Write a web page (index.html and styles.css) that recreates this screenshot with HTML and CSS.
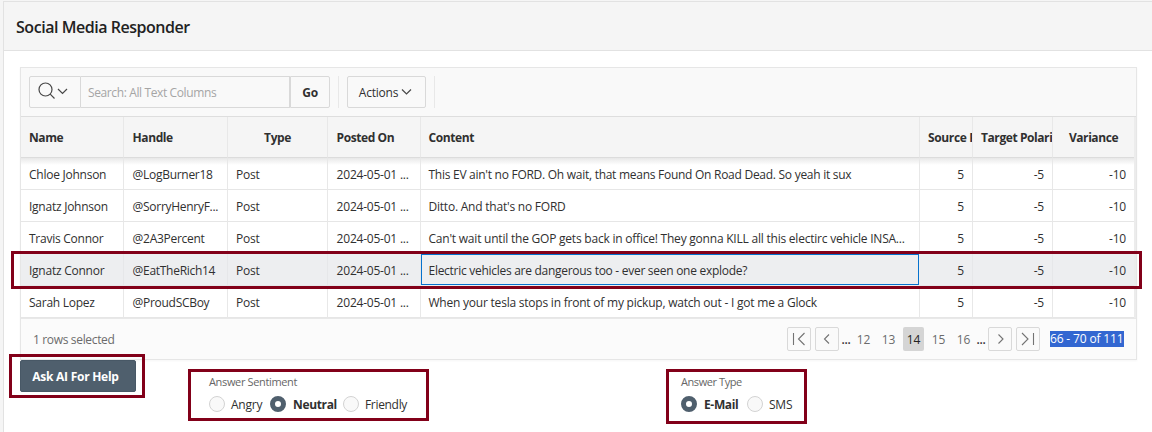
FILE: index.html
```
<!DOCTYPE html>
<html lang="en">
<head>
<meta charset="utf-8">
<title>Social Media Responder</title>
<link rel="stylesheet" href="styles.css">
</head>
<body>
<main class="region">
  <header class="region-header"><h1>Social Media Responder</h1></header>
  <div class="region-body">
    <section class="grid">
      <div class="toolbar">
        <div class="search">
          <button class="search-type"><svg width="34" height="20" viewBox="0 0 34 20"><circle cx="7.500" cy="7.500" r="6.500"/><path d="M12.200 12.200L16.500 16.500M20 7l4.500 4.500L29 7"/></svg></button>
          <div class="search-field">Search: All Text Columns</div>
          <button class="go">Go</button>
        </div>
        <div class="actions-wrap"><button class="actions">Actions<svg width="11" height="8" viewBox="0 0 11 8"><path d="M1 1.500l4.500 4.500L10 1.500"/></svg></button></div>
      </div>
      <div class="table">
        <div class="row head"><div>Name</div><div>Handle</div><div class="center">Type</div><div>Posted On</div><div>Content</div><div class="clip">Source P</div><div class="clip">Target Polari</div><div class="center">Variance</div></div>
        <div class="row first"><div>Chloe Johnson</div><div>@LogBurner18</div><div>Post</div><div>2024-05-01 ...</div><div>This EV ain't no FORD. Oh wait, that means Found On Road Dead. So yeah it sux</div><div class="num">5</div><div class="num">-5</div><div class="num">-10</div></div>
        <div class="row"><div>Ignatz Johnson</div><div>@SorryHenryF...</div><div>Post</div><div>2024-05-01 ...</div><div>Ditto. And that's no FORD</div><div class="num">5</div><div class="num">-5</div><div class="num">-10</div></div>
        <div class="row"><div>Travis Connor</div><div>@2A3Percent</div><div>Post</div><div>2024-05-01 ...</div><div>Can't wait until the GOP gets back in office! They gonna KILL all this electirc vehicle INSA...</div><div class="num">5</div><div class="num">-5</div><div class="num">-10</div></div>
        <div class="row selected"><div>Ignatz Connor</div><div>@EatTheRich14</div><div>Post</div><div>2024-05-01 ...</div><div class="focused">Electric vehicles are dangerous too - ever seen one explode?</div><div class="num">5</div><div class="num">-5</div><div class="num">-10</div></div>
        <div class="row"><div>Sarah Lopez</div><div>@ProudSCBoy</div><div>Post</div><div>2024-05-01 ...</div><div>When your tesla stops in front of my pickup, watch out - I got me a Glock</div><div class="num">5</div><div class="num">-5</div><div class="num">-10</div></div>
      </div>
      <footer class="grid-footer">
        <span class="status">1 rows selected</span>
        <nav class="pager">
          <button class="page-btn"><svg width="22" height="22" viewBox="0 0 22 22"><path d="M5.500 5v12M16.500 5l-6 6 6 6"/></svg></button>
          <button class="page-btn prev"><svg width="22" height="22" viewBox="0 0 22 22"><path d="M13 6.500l-4.500 4.500 4.500 4.500"/></svg></button>
          <span class="dots">...</span>
          <span class="page">12</span><span class="page">13</span><span class="page current">14</span><span class="page">15</span><span class="page">16</span>
          <span class="dots end">...</span>
          <button class="page-btn next"><svg width="22" height="22" viewBox="0 0 22 22"><path d="M9.500 6.500l4.500 4.500-4.500 4.500"/></svg></button>
          <button class="page-btn last"><svg width="22" height="22" viewBox="0 0 22 22"><path d="M5 5l6 6-6 6M16.500 5v12"/></svg></button>
          <span class="range">66 - 70 of 111</span>
        </nav>
      </footer>
    </section>
    <div class="controls">
      <button class="ask">Ask AI For Help</button>
      <div class="field sentiment"><div class="label">Answer Sentiment</div>
        <div class="options"><i class="radio"></i><span class="angry">Angry</span><i class="radio on"></i><b class="neutral">Neutral</b><i class="radio"></i><span class="friendly">Friendly</span></div></div>
      <div class="field type"><div class="label">Answer Type</div>
        <div class="options"><i class="radio on"></i><b class="email">E-Mail</b><i class="radio"></i><span>SMS</span></div></div>
    </div>
  </div>
</main>
<div class="callout callout-row"></div>
<div class="callout callout-ask"></div>
<div class="callout callout-sentiment"></div>
<div class="callout callout-type"></div>
</body>
</html>
```
FILE: styles.css
```
* { box-sizing: border-box; }
body { margin: 0; height: 432px; overflow: hidden; position: relative; padding: 1px 0 0 3px; background: #f5f5f5; font: 12px/16px "Segoe UI", "Open Sans", "Noto Sans", sans-serif; letter-spacing: -.22px; color: #303030; }
button { font: inherit; letter-spacing: inherit; color: inherit; margin: 0; padding: 0; }
svg { fill: none; stroke: #484848; stroke-width: 1.2; display: block; }
.region { height: 431px; border: 1px solid #e2e2e2; border-width: 1px 0 0 1px; background: #fff; }
.region-header { height: 49px; background: #f5f5f5; border-bottom: 1px solid #e2e2e2; padding: 14px 12px 0; }
h1 { margin: 0; font-size: 16px; line-height: 22px; font-weight: 600; letter-spacing: -.46px; color: #222; }
.region-body { padding: 16px 15px 0 16px; }
.grid { width: 1117px; height: 293px; border: 1px solid #e6e6e6; box-shadow: 0 1px 2px #0000000a; }
.toolbar { height: 49px; background: #f9f9f9; border-bottom: 1px solid #dedede; padding: 8px; display: flex; }
.search { display: flex; width: 301px; height: 32px; }
.search-type, .go, .actions, .search-field { border: 1px solid #d9d9d9; background: #f9f9f9; height: 32px; }
.search-type { width: 52px; padding: 0 0 0 8px; border-radius: 2px 0 0 2px; }
.search-field { width: 209px; border-left: 0; padding: 8px 7px; color: #a5a5a5; letter-spacing: -.38px; }
.go { width: 40px; border-radius: 0 2px 2px 0; font-weight: 700; padding-top: 2px; }
.actions-wrap { margin-left: 8px; width: 97px; border: 1px solid #e8e8e8; border-width: 0 1px; padding-left: 8px; }
.actions { width: 79px; display: flex; align-items: center; justify-content: center; gap: 3px; border-radius: 2px; padding: 2px 2px 0 0; }
.actions svg { margin-top: -2px; }
.table { border-right: 2px solid #ececec; }
.row { display: grid; grid-template-columns: 103px 104px 100px 93px 499px 53px 80px 1fr; height: 32px; line-height: 33px; background: #fff; }
.row > div { padding: 0 8px; border-right: 1px solid #e8e8e8; border-bottom: 1px solid #e6e6e6; white-space: nowrap; overflow: hidden; }
.row > div:nth-child(1) { letter-spacing: -.25px; }
.row > div:nth-child(2) { padding-left: 8.600px; letter-spacing: -.29px; }
.row > div:nth-child(4) { padding-left: 8.600px; }
.row > div:nth-child(5) { padding-left: 7.500px; }
.row.first > div:nth-child(5) { letter-spacing: -.27px; }
.row > div:last-child { border-right: 0; }
.row.head { height: 41px; line-height: 42px; background: #f5f5f5; }
.row.head > div { font-weight: 700; letter-spacing: -.42px; border-bottom: 1px solid #dcdcdc; }
.row.head > div:nth-child(6) { letter-spacing: -.36px; }
.first > div { background: linear-gradient(#e8e8e8, #fff 7px); }
.center { text-align: center; }
.row > .clip { padding-right: 0; }
.num { text-align: right; }
.selected { background: #edeef0; }
.selected > div { border-color: #e6e7e9; }
.row > .focused:nth-child(5) { margin-right: 1px; border: 1px solid #0572ce; line-height: 31px; padding-left: 6.500px; height: 31px; letter-spacing: -.28px; }
.grid-footer { height: 41px; border-top: 1px solid #e8e8e8; background: #fbfbfb; color: #6b6b6b; display: flex; justify-content: space-between; padding: 8px 12px 0; }
.status { padding-top: 5px; letter-spacing: -.34px; }
.pager { display: flex; height: 24px; align-items: center; }
.page-btn { width: 24px; height: 24px; border: 1px solid #d9d9d9; border-radius: 2px; background: #fafafa; }
.page-btn svg { stroke: #737373; stroke-width: 1.1; }
.prev { margin-left: 4px; }
.last { margin-left: 4px; }
.dots { width: 12px; margin-left: 1px; text-align: center; color: #333; padding-top: 1px; font-weight: 600; }
.page { width: 25px; line-height: 26px; height: 24px; text-align: center; }
.page:nth-child(4) { margin-left: -1px; }
.page.current { width: 21px; margin: 0 2px; background: #d5d5d5; color: #222; border-radius: 2px; }
.dots.end { width: 12px; margin-left: -1px; margin-right: 1px; }
.range { margin-left: 10px; width: 74px; background: #3367d1; color: #fff; white-space: nowrap; letter-spacing: -.16px; }
.controls { display: flex; }
.ask { width: 116px; height: 32px; border: 1px solid #485866; border-radius: 2px; background: #4f5f6d; color: #fff; font-weight: 700; letter-spacing: -.26px; padding: 2px 5px 0 0; }
.field { padding-top: 14px; }
.sentiment { margin-left: 73px; width: 472px; }
.label { font-size: 11px; color: #666; letter-spacing: -.35px; }
.type .label { letter-spacing: -.42px; }
.options { display: flex; align-items: center; height: 16px; margin-top: 6px; white-space: nowrap; }
.options span, .options b { padding-top: 2px; }
.radio { width: 16px; height: 16px; border: 1px solid #d3d3d3; border-radius: 50%; background: #f9f9f9; margin-right: 6px; flex: none; }
.radio.on { background: #fff; border: 5px solid #4f5f6d; }
.angry { width: 33px; margin-right: 6px; }
.neutral { width: 44px; margin-left: 1px; margin-right: 6px; }
.friendly { letter-spacing: -.32px; }
.email { width: 38px; margin-left: 1px; margin-right: 5px; }
b { font-weight: 700; letter-spacing: -.35px; }
.callout { position: absolute; border: 3px solid #820019; }
.callout-row { left: 11px; top: 251px; width: 1131px; height: 38px; }
.callout-ask { left: 9px; top: 354px; width: 136px; height: 44px; }
.callout-sentiment { left: 188px; top: 369px; width: 241px; height: 52px; }
.callout-type { left: 666px; top: 369px; width: 141px; height: 55px; }
```
